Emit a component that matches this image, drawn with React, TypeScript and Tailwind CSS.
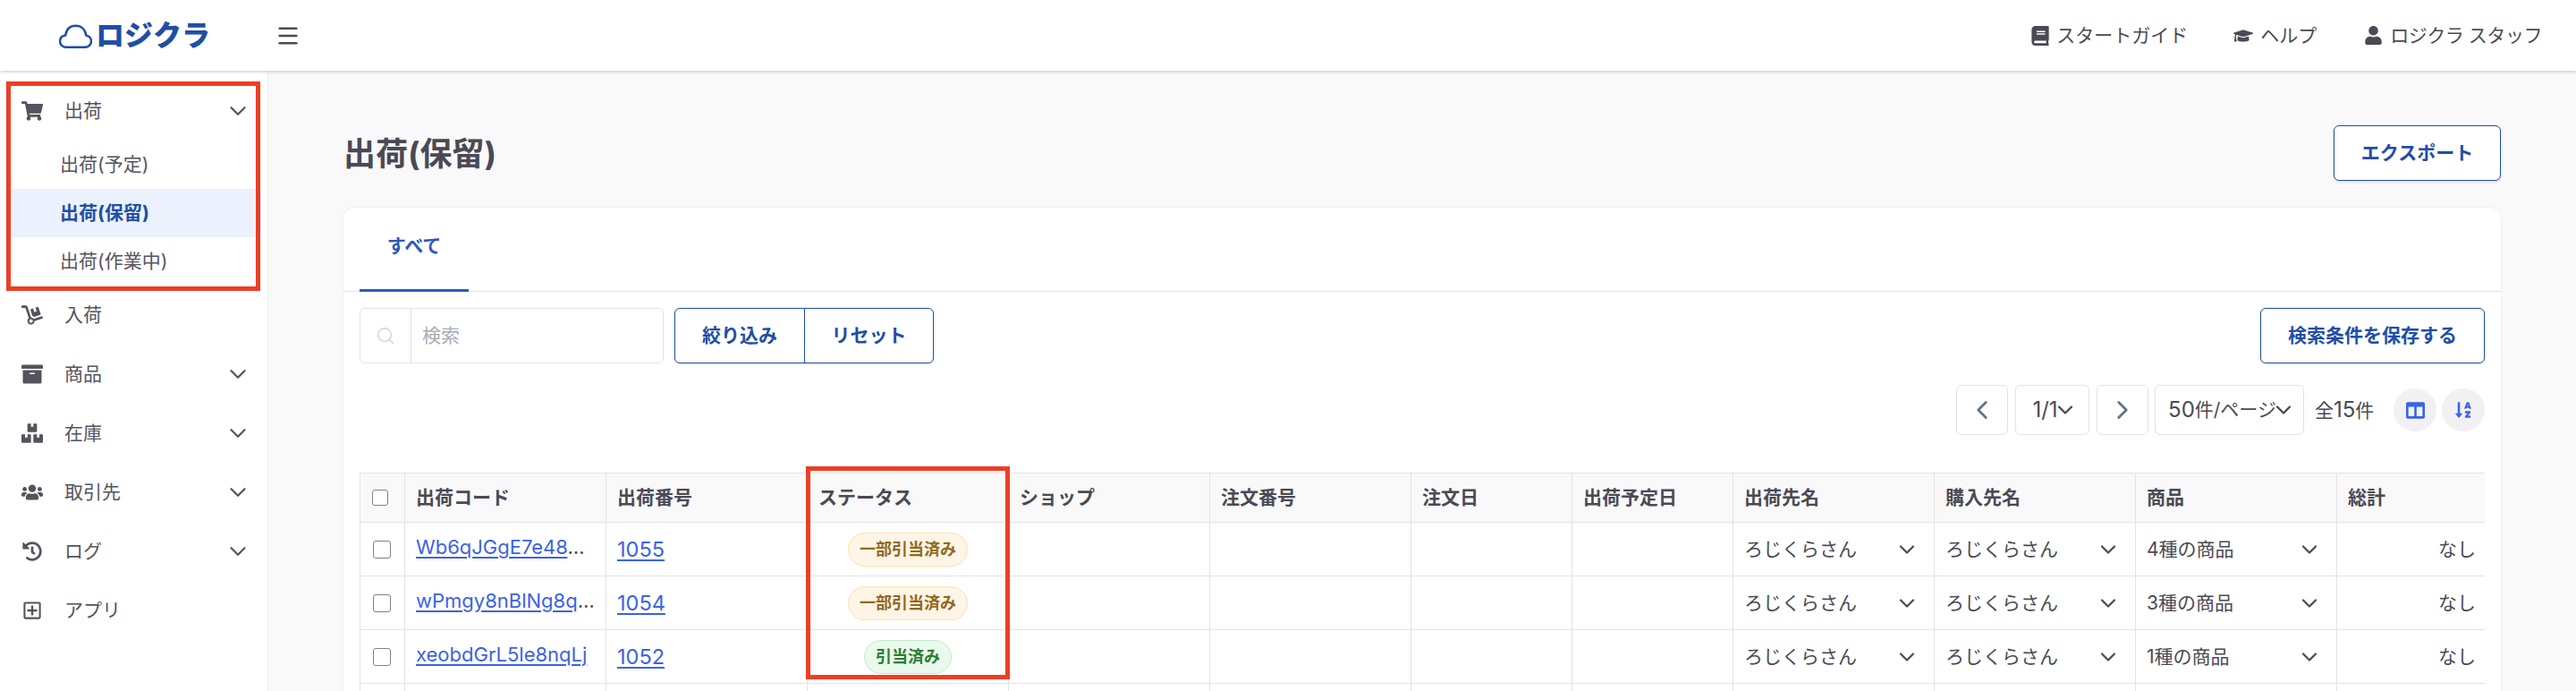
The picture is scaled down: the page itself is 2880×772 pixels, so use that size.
import { ChevronDown, ChevronLeft, ChevronRight, Menu, Search } from 'lucide-react';
import {
  FaArchive,
  FaBook,
  FaBoxes,
  FaColumns,
  FaDolly,
  FaGraduationCap,
  FaHistory,
  FaRegPlusSquare,
  FaShoppingCart,
  FaSortAlphaDown,
  FaUser,
  FaUsers,
} from 'react-icons/fa';
import type { ReactNode } from 'react';

const columns = [
  { label: '出荷コード', width: 225 },
  { label: '出荷番号', width: 225 },
  { label: 'ステータス', width: 225 },
  { label: 'ショップ', width: 225 },
  { label: '注文番号', width: 225 },
  { label: '注文日', width: 180 },
  { label: '出荷予定日', width: 180 },
  { label: '出荷先名', width: 225 },
  { label: '購入先名', width: 225 },
  { label: '商品', width: 225 },
  { label: '総計', width: 166 },
];

const rows = [
  { code: 'Wb6qJGgE7e48', cut: true, no: '1055', status: '一部引当済み', partial: true, items: '4種の商品' },
  { code: 'wPmgy8nBlNg8q', cut: true, no: '1054', status: '一部引当済み', partial: true, items: '3種の商品' },
  { code: 'xeobdGrL5le8nqLj', cut: false, no: '1052', status: '引当済み', partial: false, items: '1種の商品' },
];

function NavItem({ icon, label, chevron = true }: { icon: ReactNode; label: string; chevron?: boolean }) {
  return (
    <div className="flex h-[66px] items-center pl-6 pr-[18px] text-[21px] text-[#55535e]">
      <span className="flex w-6 justify-center text-[24px]">{icon}</span>
      <span className="ml-6 flex-1">{label}</span>
      {chevron && <ChevronDown size={30} strokeWidth={1.8} />}
    </div>
  );
}

function Sidebar() {
  return (
    <aside className="w-[300px] shrink-0 border-r border-[#f0f0f2] bg-white pt-3">
      <div className="relative pb-[6px]">
        <NavItem icon={<FaShoppingCart />} label="出荷" />
        <div className="mx-[7px] flex h-[54px] items-center pl-[60px] text-[21px] text-[#55535e]">出荷(予定)</div>
        <div className="mx-[7px] flex h-[54px] items-center bg-[#ebf2fd] pl-[60px] text-[21px] font-bold text-[#1f4ea8]">出荷(保留)</div>
        <div className="mx-[7px] flex h-[54px] items-center pl-[60px] text-[21px] text-[#55535e]">出荷(作業中)</div>
        <div className="pointer-events-none absolute bottom-0 left-[7px] top-0 w-[284px] border-[5px] border-[#ec3f25]" />
      </div>
      <div className="-mt-[6px]">
        <NavItem icon={<FaDolly />} label="入荷" chevron={false} />
        <NavItem icon={<FaArchive />} label="商品" />
        <NavItem icon={<FaBoxes />} label="在庫" />
        <NavItem icon={<FaUsers />} label="取引先" />
        <NavItem icon={<FaHistory className="text-[22px]" />} label="ログ" />
        <NavItem icon={<FaRegPlusSquare className="text-[22px]" />} label="アプリ" chevron={false} />
      </div>
    </aside>
  );
}

function Header() {
  return (
    <header className="relative z-10 flex h-[79px] shrink-0 items-center bg-white pl-[66px] pr-[38px] shadow-[0_1px_4px_rgba(100,116,139,0.4)]">
      <svg width="37" height="27" viewBox="0 0 36 26" fill="none" stroke="#1f4ea8" strokeWidth="2.4" className="mt-[2px]">
        <path d="M8 25H28C32 25 35 22 35 18.5C35 15 32.5 12.5 29.5 12C28.5 5.5 24 1.5 18 1.5C12 1.5 8 5.5 7 12C3.5 12.5 1 15 1 18.5C1 22 4 25 8 25Z" />
      </svg>
      <span className="ml-[4px] w-[130px] whitespace-nowrap text-[32px] font-black leading-none text-[#1f4ea8]">ロジクラ</span>
      <Menu size={28} strokeWidth={2.2} className="ml-[71px] text-[#4a4a55]" />
      <div className="ml-auto flex items-center text-[21px] text-[#4a4a55]">
        <FaBook className="text-[22px]" />
        <span className="ml-[7px]">スタートガイド</span>
        <FaGraduationCap className="ml-[51px] text-[22px]" />
        <span className="ml-2">ヘルプ</span>
        <FaUser className="ml-[53px] text-[21px]" />
        <span className="ml-2 tracking-[-0.45px]">ロジクラ スタッフ</span>
      </div>
    </header>
  );
}

function OutlineButton({ label, className }: { label: string; className: string }) {
  return (
    <button className={`h-[62px] rounded-[6px] border border-[#1f4ea8] bg-white text-[21px] font-bold text-[#1f4ea8] shadow-[0_1px_3px_rgba(0,0,0,0.15)] ${className}`}>
      {label}
    </button>
  );
}

function Toolbar() {
  return (
    <div className="flex items-start justify-between px-[18px] pt-[18px]">
      <div className="flex">
        <div className="flex h-[62px] w-[340px] rounded-[6px] border border-[#e2e2e6] bg-white">
          <div className="flex w-[57px] items-center justify-center border-r border-[#e2e2e6]">
            <Search size={22} strokeWidth={1.5} className="text-[#cbd2df]" />
          </div>
          <span className="flex items-center pl-3 text-[21px] text-[#a8acb6]">検索</span>
        </div>
        <div className="ml-3 flex h-[62px] w-[290px] rounded-[6px] border border-[#1f4ea8] bg-white text-[21px] font-bold text-[#1f4ea8] shadow-[0_1px_3px_rgba(0,0,0,0.15)]">
          <span className="flex w-[145px] items-center justify-center border-r border-[#1f4ea8]">絞り込み</span>
          <span className="flex flex-1 items-center justify-center">リセット</span>
        </div>
      </div>
      <OutlineButton label="検索条件を保存する" className="w-[251px]" />
    </div>
  );
}

function Pagination() {
  const box = 'flex h-[56px] items-center justify-center rounded-[6px] border border-[#e2e2e6] bg-white text-[21px] text-[#4a4a55]';
  return (
    <div className="flex items-center justify-end pr-[18px] pt-6">
      <div className={`${box} w-[58px]`}>
        <ChevronLeft size={34} strokeWidth={2} className="text-[#64748b]" />
      </div>
      <div className={`${box} ml-2 w-[83px]`}>
        <span className="text-[24px]">1/1</span>
        <ChevronDown size={28} strokeWidth={2} className="-mx-[6px]" />
      </div>
      <div className={`${box} ml-2 w-[58px]`}>
        <ChevronRight size={34} strokeWidth={2} className="text-[#64748b]" />
      </div>
      <div className={`${box} ml-[7px] w-[167px]`}>
        <span className="text-[24px]">50</span>件/ページ
        <ChevronDown size={28} strokeWidth={2} className="-mx-[6px]" />
      </div>
      <span className="ml-3 w-[70px] whitespace-nowrap text-[21px] text-[#4a4a55]">
        全<span className="text-[24px]">15</span>件
      </span>
      <span className="ml-[18px] flex h-12 w-12 items-center justify-center rounded-full bg-[#f1f1f3] text-[21px] text-[#3b62e8]">
        <FaColumns />
      </span>
      <span className="ml-1.5 flex h-12 w-12 items-center justify-center rounded-full bg-[#f1f1f3] text-[20px] text-[#3b62e8]">
        <FaSortAlphaDown />
      </span>
    </div>
  );
}

function CellSelect({ label }: { label: string }) {
  return (
    <div className="flex items-center justify-between pr-1">
      <span>{label}</span>
      <ChevronDown size={28} strokeWidth={1.9} />
    </div>
  );
}

function DataTable() {
  const th = 'h-[55px] border border-[#e3e3e5] bg-[#f9f9f9] px-3 text-left text-[21px] font-bold text-[#4a4a55]';
  const td = 'h-[60px] border border-[#e3e3e5] px-3 text-[21px] text-[#4a4a55]';
  const link = 'text-[#3b62e8] underline decoration-2 underline-offset-[3px]';
  return (
    <div className="relative mx-[18px] mt-[42px]">
      <div className="overflow-hidden">
        <table className="w-[2376px] table-fixed border-collapse">
          <colgroup>
            <col className="w-[50px]" />
            {columns.map((c) => (
              <col key={c.label} style={{ width: c.width }} />
            ))}
          </colgroup>
          <thead>
            <tr>
              <th className={`${th} !px-0`}>
                <input type="checkbox" className="ml-[13px] block h-[18px] w-[18px] appearance-none rounded-[3px] border border-[#808080] bg-white" />
              </th>
              {columns.map((c) => (
                <th key={c.label} className={th}>{c.label}</th>
              ))}
            </tr>
          </thead>
          <tbody>
            {rows.map((r) => (
              <tr key={r.no}>
                <td className={`${td} !px-0`}>
                  <input type="checkbox" className="ml-[14px] block h-5 w-5 appearance-none rounded-[3px] border border-[#808080] bg-white" />
                </td>
                <td className={td}>
                  <div className="whitespace-nowrap pb-1 text-[22px]">
                    <a className={link}>{r.code}</a>
                    {r.cut && '…'}
                  </div>
                </td>
                <td className={td}>
                  <a className={`${link} text-[23.5px]`}>{r.no}</a>
                </td>
                <td className={`${td} text-center`}>
                  <span
                    className={
                      r.partial
                        ? 'inline-flex h-[38px] items-center rounded-full border border-[#fbe2ad] bg-[#fef5e7] px-3 text-[18px] font-semibold text-[#92681c]'
                        : 'inline-flex h-[38px] items-center rounded-full border border-[#c0edc9] bg-[#e9f9ec] px-3 text-[18px] font-semibold text-[#2e7d32]'
                    }
                  >
                    {r.status}
                  </span>
                </td>
                <td className={td} />
                <td className={td} />
                <td className={td} />
                <td className={td} />
                <td className={td}><CellSelect label="ろじくらさん" /></td>
                <td className={td}><CellSelect label="ろじくらさん" /></td>
                <td className={td}><CellSelect label={r.items} /></td>
                <td className={`${td} !pr-[10px] text-right`}>なし</td>
              </tr>
            ))}
            <tr>
              <td className={td} />
              {columns.map((c) => (
                <td key={c.label} className={td} />
              ))}
            </tr>
          </tbody>
        </table>
      </div>
      <div className="pointer-events-none absolute left-[499px] top-[-7px] h-[238px] w-[228px] border-[5px] border-[#ec3f25]" />
    </div>
  );
}

export default function App() {
  return (
    <div className="flex h-screen flex-col overflow-hidden bg-[#f9f9fa] font-[Inter,'Noto_Sans_CJK_JP',sans-serif]">
      <Header />
      <div className="flex min-h-0 flex-1">
        <Sidebar />
        <main className="min-w-0 flex-1 pl-[84px] pr-[84px] pt-[61px]">
          <div className="flex items-start justify-between">
            <h1 className="mt-[5px] text-[36px] font-bold leading-[54px] text-[#4a4a55]">出荷(保留)</h1>
            <OutlineButton label="エクスポート" className="w-[187px]" />
          </div>
          <section className="mt-[30px] rounded-t-[12px] bg-white pb-6 shadow-[0_0_3px_rgba(0,0,0,0.08)]">
            <div className="flex h-[94px] border-b border-[#e3e3e5] px-[18px]">
              <div className="flex h-[94px] w-[122px] items-center justify-center border-b-[3px] border-[#2c5ab8] pb-[6px] text-[21px] font-bold text-[#2c5ab8]">
                すべて
              </div>
            </div>
            <Toolbar />
            <Pagination />
            <DataTable />
          </section>
        </main>
      </div>
    </div>
  );
}
